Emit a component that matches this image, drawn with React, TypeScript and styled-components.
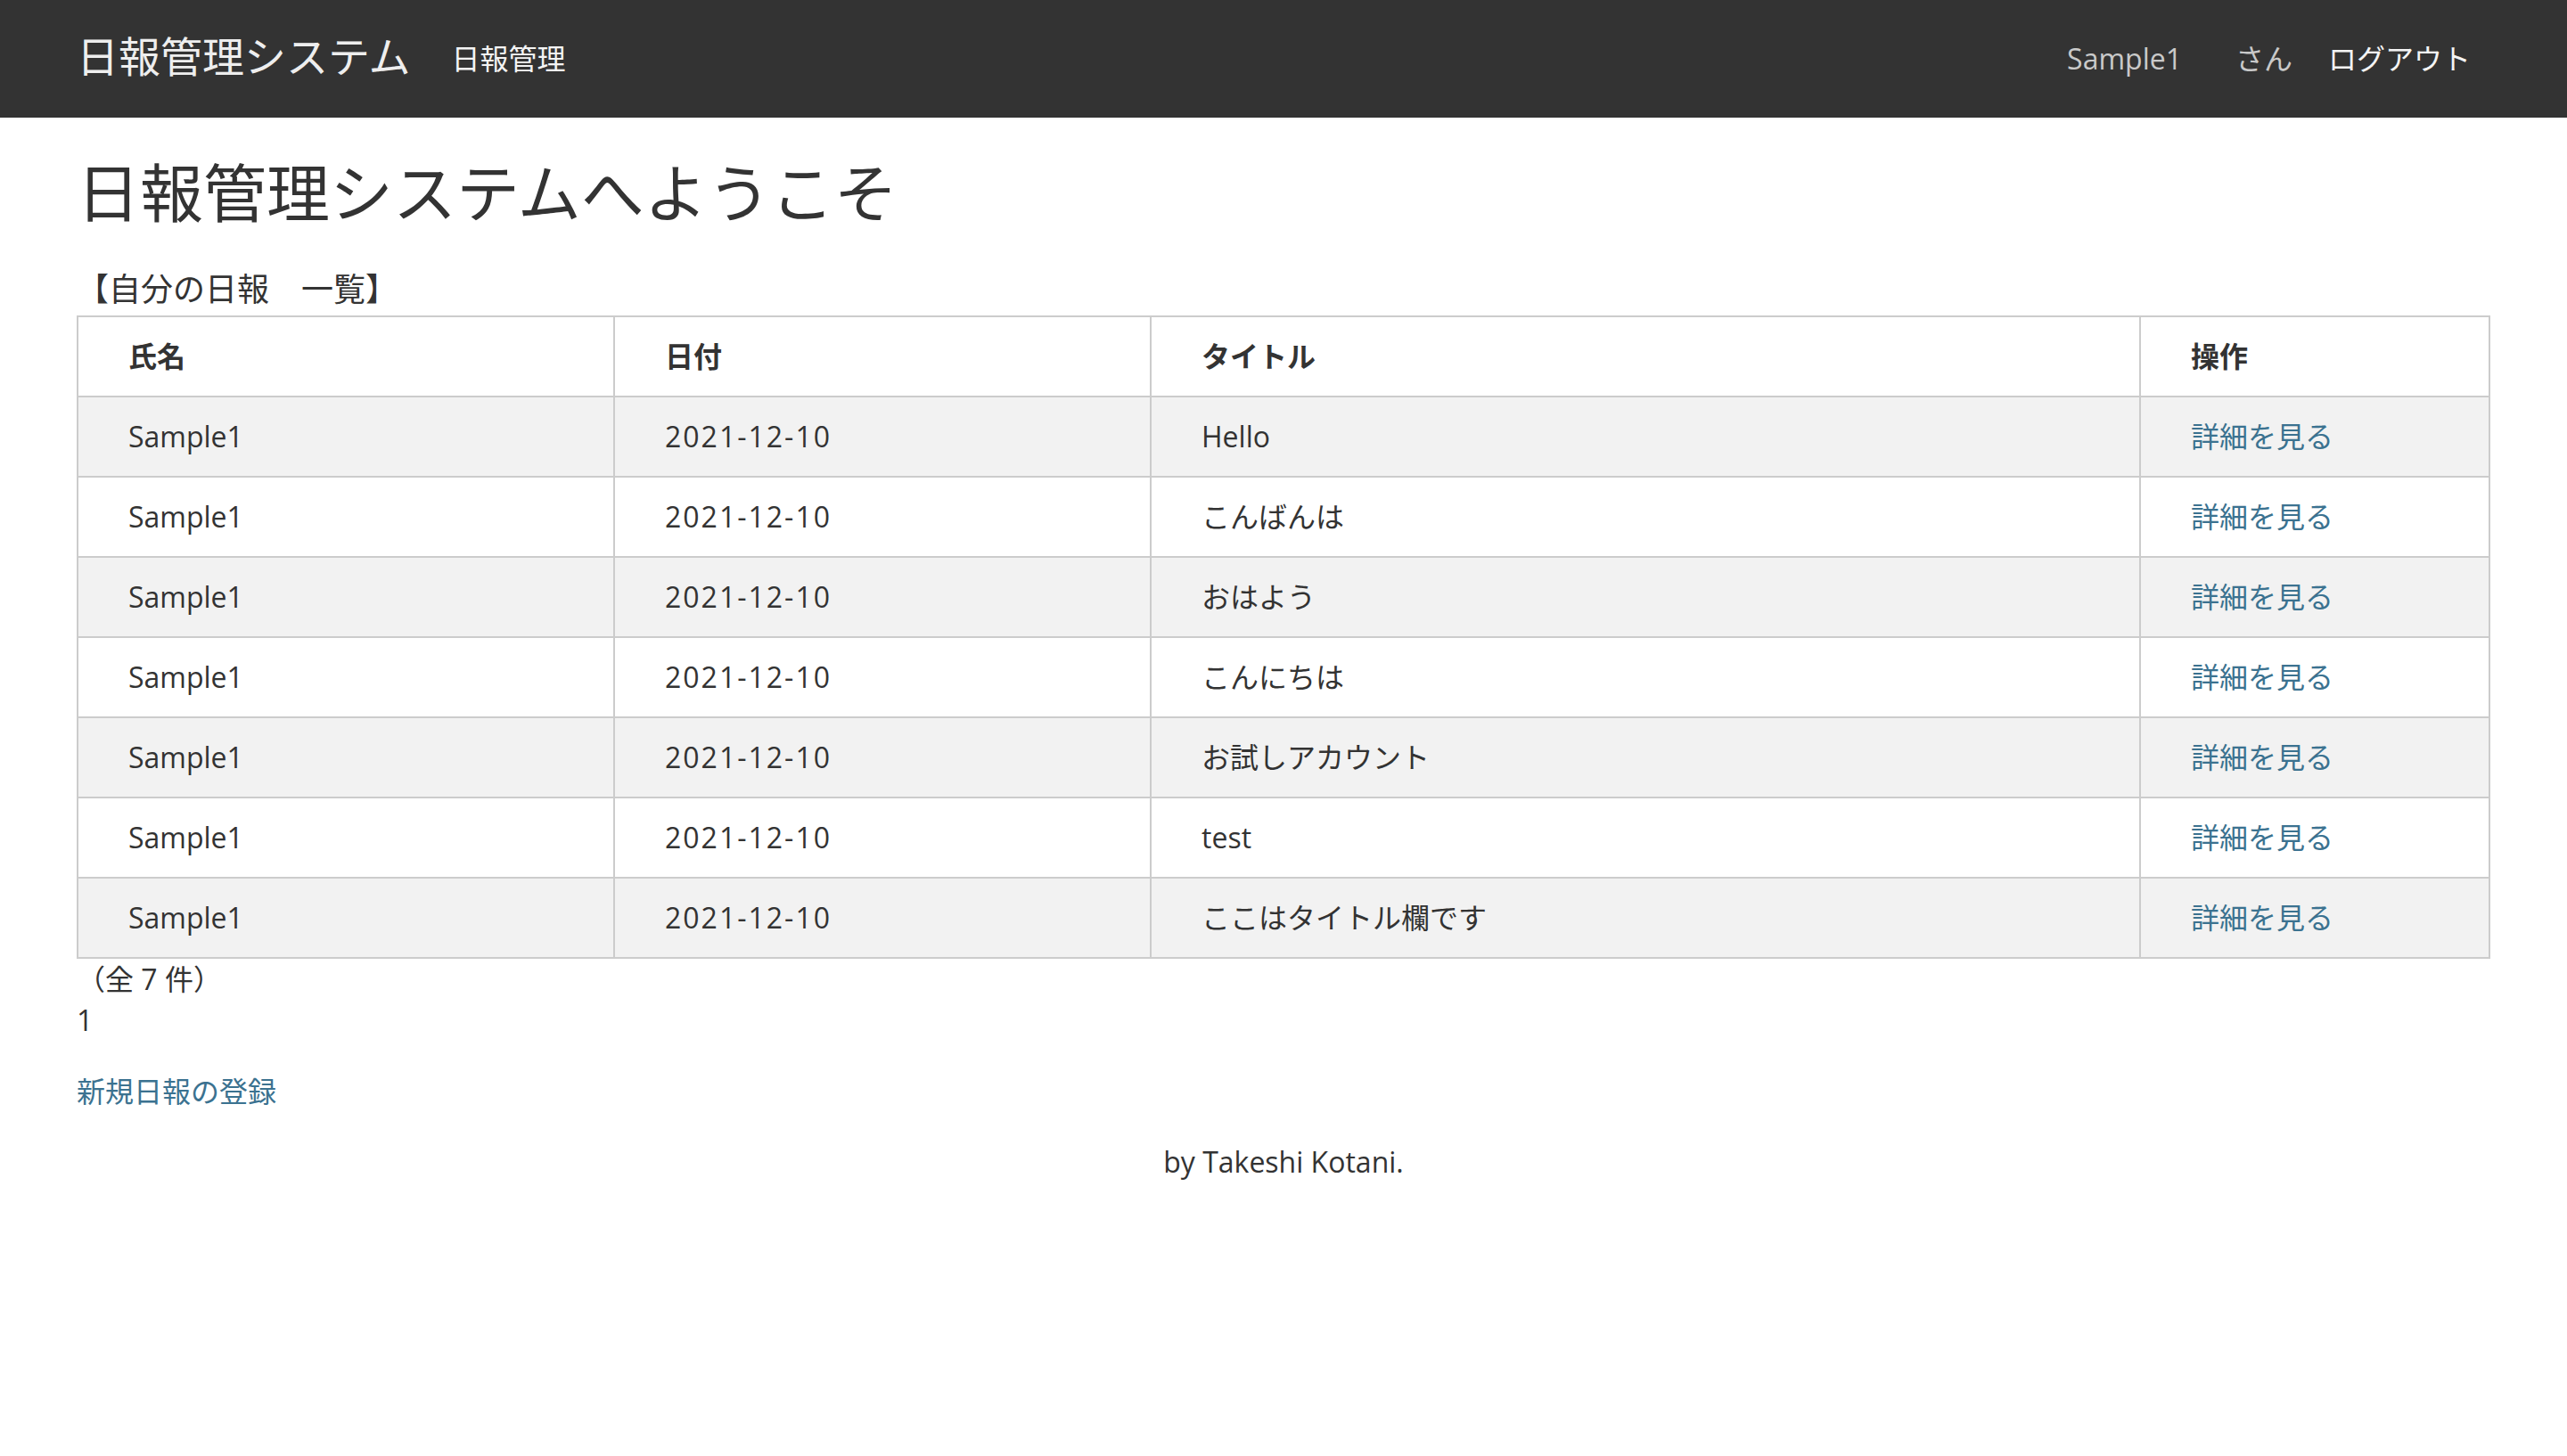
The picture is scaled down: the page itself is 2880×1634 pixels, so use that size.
import React from "react";
import styled, { createGlobalStyle } from "styled-components";

const GlobalStyle = createGlobalStyle`
  html, body {
    margin: 0;
    padding: 0;
    background: #ffffff;
  }
  body {
    font-family: "Open Sans", "Noto Sans CJK JP", sans-serif;
    font-size: 32px;
    line-height: 46px;
    color: #333333;
  }
  * { box-sizing: border-box; }
`;

const Header = styled.header`
  height: 132px;
  background: #333333;
  display: flex;
  align-items: center;
  padding: 0 86px;
`;

const Brand = styled.a`
  font-size: 47px;
  line-height: 60px;
  color: #eeeeee;
  text-decoration: none;
  margin-top: -6px;
`;

const NavLink = styled.a<{ $muted?: boolean; $push?: boolean; $gap: number }>`
  font-size: 32px;
  line-height: 46px;
  color: ${(p) => (p.$muted ? "#c9c9c9" : "#f4f4f4")};
  text-decoration: none;
  margin-left: ${(p) => (p.$push ? "auto" : `${p.$gap}px`)};
`;

const RightPad = styled.span`
  width: 22px;
`;

const Main = styled.main`
  padding: 0 86px;
`;

const Title = styled.h1`
  font-size: 71px;
  line-height: 79px;
  font-weight: 400;
  margin: 44px 0 47px;
  color: #333333;
`;

const Caption = styled.div`
  font-size: 36px;
  line-height: 46px;
`;

const Table = styled.table`
  width: 100%;
  margin-top: 6px;
  border-collapse: collapse;
  table-layout: fixed;
  border: 2px solid #cccccc;
`;

const Col = styled.col<{ $w?: number }>`
  width: ${(p) => (p.$w ? `${p.$w}px` : "auto")};
`;

const Row = styled.tr<{ $striped?: boolean }>`
  background: ${(p) => (p.$striped ? "#f2f2f2" : "#ffffff")};
`;

const HeadCell = styled.th`
  height: 90px;
  padding: 0 56px;
  border: 2px solid #cccccc;
  text-align: left;
  vertical-align: middle;
  font-weight: 700;
  font-size: 32px;
`;

const Cell = styled.td<{ $spaced?: boolean }>`
  height: 90px;
  padding: 0 56px;
  border: 2px solid #cccccc;
  vertical-align: middle;
  font-size: 32px;
  letter-spacing: ${(p) => (p.$spaced ? "2px" : "0")};
  white-space: nowrap;
`;

const LinkText = styled.a`
  color: #3b7290;
  text-decoration: none;
`;

const Line = styled.div`
  line-height: 46px;
`;

const NewLink = styled(LinkText)`
  display: block;
  margin-top: 34px;
  line-height: 46px;
`;

const Footer = styled.footer`
  margin-top: 33px;
  text-align: center;
  line-height: 46px;
`;

const reports = [
  "Hello",
  "こんばんは",
  "おはよう",
  "こんにちは",
  "お試しアカウント",
  "test",
  "ここはタイトル欄です",
];

export default function App() {
  return (
    <>
      <GlobalStyle />
      <Header>
        <Brand href="#">日報管理システム</Brand>
        <NavLink href="#" $gap={46}>日報管理</NavLink>
        <NavLink $muted $push $gap={0}>Sample1</NavLink>
        <NavLink $muted $gap={60}>さん</NavLink>
        <NavLink href="#" $gap={40}>ログアウト</NavLink>
        <RightPad />
      </Header>
      <Main>
        <Title>日報管理システムへようこそ</Title>
        <Caption>【自分の日報　一覧】</Caption>
        <Table>
          <colgroup>
            <Col $w={602} />
            <Col $w={602} />
            <Col $w={1110} />
            <Col />
          </colgroup>
          <thead>
            <Row>
              <HeadCell>氏名</HeadCell>
              <HeadCell>日付</HeadCell>
              <HeadCell>タイトル</HeadCell>
              <HeadCell>操作</HeadCell>
            </Row>
          </thead>
          <tbody>
            {reports.map((title, i) => (
              <Row key={i} $striped={i % 2 === 0}>
                <Cell>Sample1</Cell>
                <Cell $spaced>2021-12-10</Cell>
                <Cell>{title}</Cell>
                <Cell>
                  <LinkText href="#">詳細を見る</LinkText>
                </Cell>
              </Row>
            ))}
          </tbody>
        </Table>
        <Line>（全 7 件）</Line>
        <Line>1</Line>
        <NewLink href="#">新規日報の登録</NewLink>
        <Footer>by Takeshi Kotani.</Footer>
      </Main>
    </>
  );
}
